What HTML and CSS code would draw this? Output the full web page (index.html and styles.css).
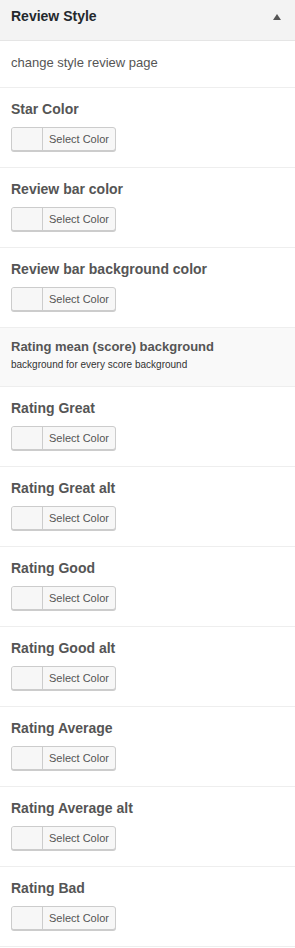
FILE: index.html
```html
<!DOCTYPE html>
<html lang="en">
<head>
    <meta charset="UTF-8">
    <meta name="viewport" content="width=device-width, initial-scale=1.0">
    <title>Review Style</title>
    <link rel="stylesheet" href="styles.css">
</head>
<body>
    <div class="panel">
        <div class="panel-header">
            <h2>Review Style</h2>
            <span class="toggle-arrow"></span>
        </div>

        <div class="panel-desc">change style review page</div>

        <div class="option">
            <h3>Star Color</h3>
            <div class="color-picker"><span class="swatch"></span><span class="picker-label">Select Color</span></div>
        </div>
        <div class="option">
            <h3>Review bar color</h3>
            <div class="color-picker"><span class="swatch"></span><span class="picker-label">Select Color</span></div>
        </div>
        <div class="option">
            <h3>Review bar background color</h3>
            <div class="color-picker"><span class="swatch"></span><span class="picker-label">Select Color</span></div>
        </div>

        <div class="option-group">
            <h4>Rating mean (score) background</h4>
            <p>background for every score background</p>
        </div>

        <div class="option">
            <h3>Rating Great</h3>
            <div class="color-picker"><span class="swatch"></span><span class="picker-label">Select Color</span></div>
        </div>
        <div class="option">
            <h3>Rating Great alt</h3>
            <div class="color-picker"><span class="swatch"></span><span class="picker-label">Select Color</span></div>
        </div>
        <div class="option">
            <h3>Rating Good</h3>
            <div class="color-picker"><span class="swatch"></span><span class="picker-label">Select Color</span></div>
        </div>
        <div class="option">
            <h3>Rating Good alt</h3>
            <div class="color-picker"><span class="swatch"></span><span class="picker-label">Select Color</span></div>
        </div>
        <div class="option">
            <h3>Rating Average</h3>
            <div class="color-picker"><span class="swatch"></span><span class="picker-label">Select Color</span></div>
        </div>
        <div class="option">
            <h3>Rating Average alt</h3>
            <div class="color-picker"><span class="swatch"></span><span class="picker-label">Select Color</span></div>
        </div>
        <div class="option">
            <h3>Rating Bad</h3>
            <div class="color-picker"><span class="swatch"></span><span class="picker-label">Select Color</span></div>
        </div>
    </div>
</body>
</html>
```

FILE: styles.css
```css
* {
    margin: 0;
    padding: 0;
    box-sizing: border-box;
}

body {
    font-family: "Liberation Sans", Arial, sans-serif;
    background: #fff;
    color: #555;
}

.panel {
    width: 295px;
}

.panel-header {
    height: 41px;
    display: flex;
    align-items: center;
    justify-content: space-between;
    padding: 0 14px 8px 11px;
    background: #f3f3f3;
    border-bottom: 1px solid #e5e5e5;
}

.panel-header h2 {
    font-size: 14px;
    font-weight: bold;
    color: #23282d;
}

.toggle-arrow {
    width: 0;
    height: 0;
    border-left: 4px solid transparent;
    border-right: 4px solid transparent;
    border-bottom: 6px solid #555;
    margin-top: 2px;
}

.panel-desc {
    height: 47px;
    display: flex;
    align-items: center;
    padding: 0 11px 4px;
    font-size: 13px;
    color: #555;
    border-bottom: 1px solid #eee;
}

.option {
    height: 80px;
    padding: 12px 11px 0;
    border-bottom: 1px solid #eee;
}

.option h3 {
    font-size: 14px;
    line-height: 18px;
    font-weight: bold;
    color: #555;
    margin-bottom: 9px;
}

.color-picker {
    display: inline-flex;
    height: 24px;
    width: 105px;
    border: 1px solid #ccc;
    border-radius: 3px;
    background: #f7f7f7;
    box-shadow: 0 1px 0 #ccc;
    overflow: hidden;
}

.swatch {
    width: 31px;
    border-right: 1px solid #ccc;
    background: #f7f7f7;
}

.picker-label {
    flex: 1;
    display: flex;
    align-items: center;
    justify-content: center;
    font-size: 11px;
    color: #555;
    padding-bottom: 1px;
}

.option-group {
    height: 59px;
    padding: 10px 11px 0;
    background: #f9f9f9;
    border-bottom: 1px solid #eee;
}

.option-group h4 {
    font-size: 13px;
    line-height: 17px;
    font-weight: bold;
    color: #555;
}

.option-group p {
    font-size: 10px;
    line-height: 14px;
    margin-top: 3px;
    color: #333;
}
```
